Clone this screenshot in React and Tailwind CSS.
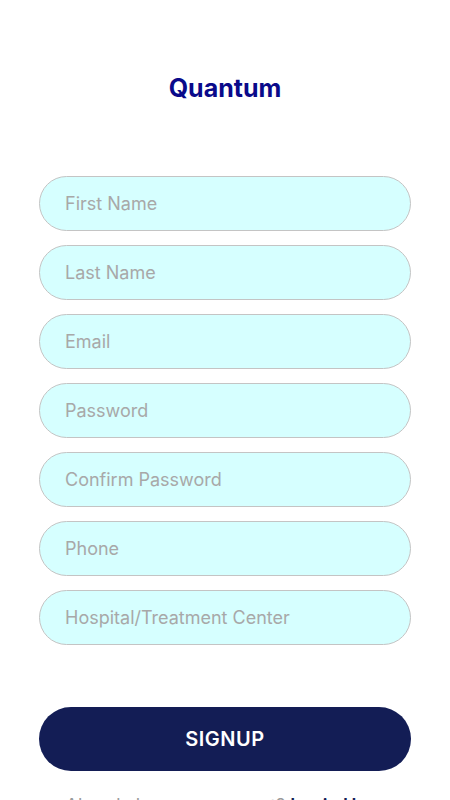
import { useState } from 'react';

const fields = [
  'First Name',
  'Last Name',
  'Email',
  'Password',
  'Confirm Password',
  'Phone',
  'Hospital/Treatment Center',
];

const App = () => {
  const [values, setValues] = useState({});

  return (
    <div className="min-h-screen bg-white font-['Inter',sans-serif] overflow-hidden h-[800px]">
      {/* TITLE */}
      <div className="pt-[72px] text-center">
        <h1 className="text-[25px] leading-[33px] font-bold text-[#0a0a8a]">Quantum</h1>
      </div>

      {/* FORM */}
      <div className="mt-[71px] px-[39px] flex flex-col gap-[14px]">
        {fields.map((f) => (
          <input
            key={f}
            type={f.includes('Password') ? 'password' : 'text'}
            placeholder={f}
            value={values[f] || ''}
            onChange={(e) => setValues({ ...values, [f]: e.target.value })}
            className="h-[55px] w-full rounded-full bg-[#d6ffff] border border-[#c4c4c4] pl-[25px] text-[18px] text-gray-700 placeholder:text-[#a8a8a8] outline-none"
          />
        ))}
      </div>

      {/* SIGNUP */}
      <div className="mt-[62px] px-[39px]">
        <button className="h-[64px] w-full rounded-full bg-[#131d55] text-white text-[20px] font-semibold tracking-wide">
          SIGNUP
        </button>
      </div>

      <p className="mt-[21px] text-center text-[18px] text-[#9a9a9a]">
        Already have an account? <span className="text-[#131d55] font-semibold">Login Here</span>
      </p>
    </div>
  );
};

export default App;
